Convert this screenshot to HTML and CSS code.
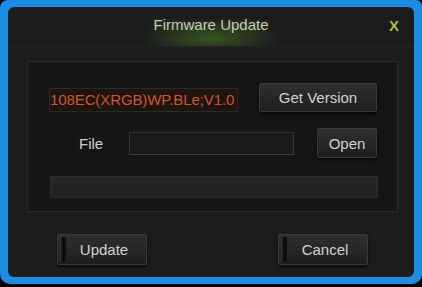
FILE: index.html
```html
<!DOCTYPE html>
<html lang="en">
<head>
    <meta charset="UTF-8">
    <meta name="viewport" content="width=device-width, initial-scale=1.0">
    <title>Firmware Update</title>
    <link rel="stylesheet" href="styles.css">
</head>
<body>
    <div class="marco">
        <div class="ventana">
            <div class="barra-titulo">
                <span class="titulo">Firmware Update</span>
                <span class="cerrar">X</span>
            </div>

            <div class="panel">
                <div class="fila fila-version">
                    <div class="version">108EC(XRGB)WP.BLe;V1.0</div>
                    <button class="boton boton-version">Get Version</button>
                </div>
                <div class="fila fila-archivo">
                    <span class="etiqueta">File</span>
                    <div class="campo"></div>
                    <button class="boton boton-abrir">Open</button>
                </div>
                <div class="progreso"></div>
            </div>

            <div class="acciones">
                <button class="boton boton-accion"><span class="ranura"></span>Update</button>
                <button class="boton boton-accion"><span class="ranura"></span>Cancel</button>
            </div>
        </div>
    </div>
</body>
</html>
```

FILE: styles.css
```css
body {
    margin: 0;
    background-color: #000;
    font-family: "Liberation Sans", Arial, sans-serif;
}
.marco {
    width: 422px;
    height: 284px;
    box-sizing: border-box;
    padding: 7px 8px 7px 8px;
    background-color: #1b8de2;
    border-radius: 8px 6px 10px 10px;
}
.ventana {
    height: 270px;
    background-color: #1c1c1c;
    border-radius: 6px;
    overflow: hidden;
}
.barra-titulo {
    position: relative;
    height: 39px;
    border-bottom: 1px solid #262626;
    display: flex;
    align-items: center;
    justify-content: center;
    background: radial-gradient(ellipse 70px 18px at 50% 80%, rgba(90, 150, 40, 0.45), rgba(90, 150, 40, 0) 100%);
}
.titulo {
    font-size: 15px;
    color: #c4cabc;
    margin-top: -4px;
    text-shadow: 0 0 6px rgba(110, 170, 50, 0.4);
}
.cerrar {
    position: absolute;
    right: 15px;
    top: 10px;
    font-size: 15px;
    font-weight: bold;
    color: #a6c43c;
}
.panel {
    margin: 14px 16px 0 19px;
    height: 149px;
    border: 1px solid #2a2a2a;
    background-color: #151515;
    padding-left: 21px;
    box-sizing: content-box;
}
.fila {
    display: flex;
    align-items: center;
}
.fila-version {
    margin-top: 21px;
    height: 29px;
}
.version {
    width: 187px;
    height: 22px;
    line-height: 22px;
    margin-top: 5px;
    background-color: #1d1512;
    border: 1px solid #33281f;
    color: #d4532a;
    font-size: 15px;
    letter-spacing: -0.1px;
    white-space: nowrap;
    overflow: hidden;
}
.boton {
    font-family: "Liberation Sans", Arial, sans-serif;
    font-size: 15px;
    color: #d2d2d2;
    background: linear-gradient(#2f2f2f, #1e1e1e);
    border: 1px solid #3a3a3a;
    border-radius: 2px;
    box-shadow: 0 2px 3px rgba(0, 0, 0, 0.7);
    padding: 0;
}
.boton-version {
    width: 118px;
    height: 29px;
    margin-left: 21px;
}
.fila-archivo {
    margin-top: 16px;
    height: 30px;
}
.etiqueta {
    width: 50px;
    margin-left: 30px;
    font-size: 15px;
    color: #d0d0d0;
}
.campo {
    width: 163px;
    height: 21px;
    background-color: #191919;
    border: 1px solid #333;
    border-bottom-color: #3c3c3c;
}
.boton-abrir {
    width: 60px;
    height: 30px;
    margin-left: 23px;
}
.progreso {
    width: 326px;
    height: 20px;
    margin-top: 18px;
    margin-left: 1px;
    background-color: #242424;
    border: 1px solid #2e2e2e;
}
.acciones {
    display: flex;
    justify-content: space-between;
    margin: 22px 46px 0 49px;
}
.boton-accion {
    position: relative;
    width: 90px;
    height: 31px;
    padding-left: 4px;
}
.ranura {
    position: absolute;
    left: 2px;
    top: 2px;
    bottom: 2px;
    width: 7px;
    background: linear-gradient(90deg, #3a3a3a, #0b0b0b 40%, #0b0b0b 70%, #2a2a2a);
    border-radius: 2px;
}
```
